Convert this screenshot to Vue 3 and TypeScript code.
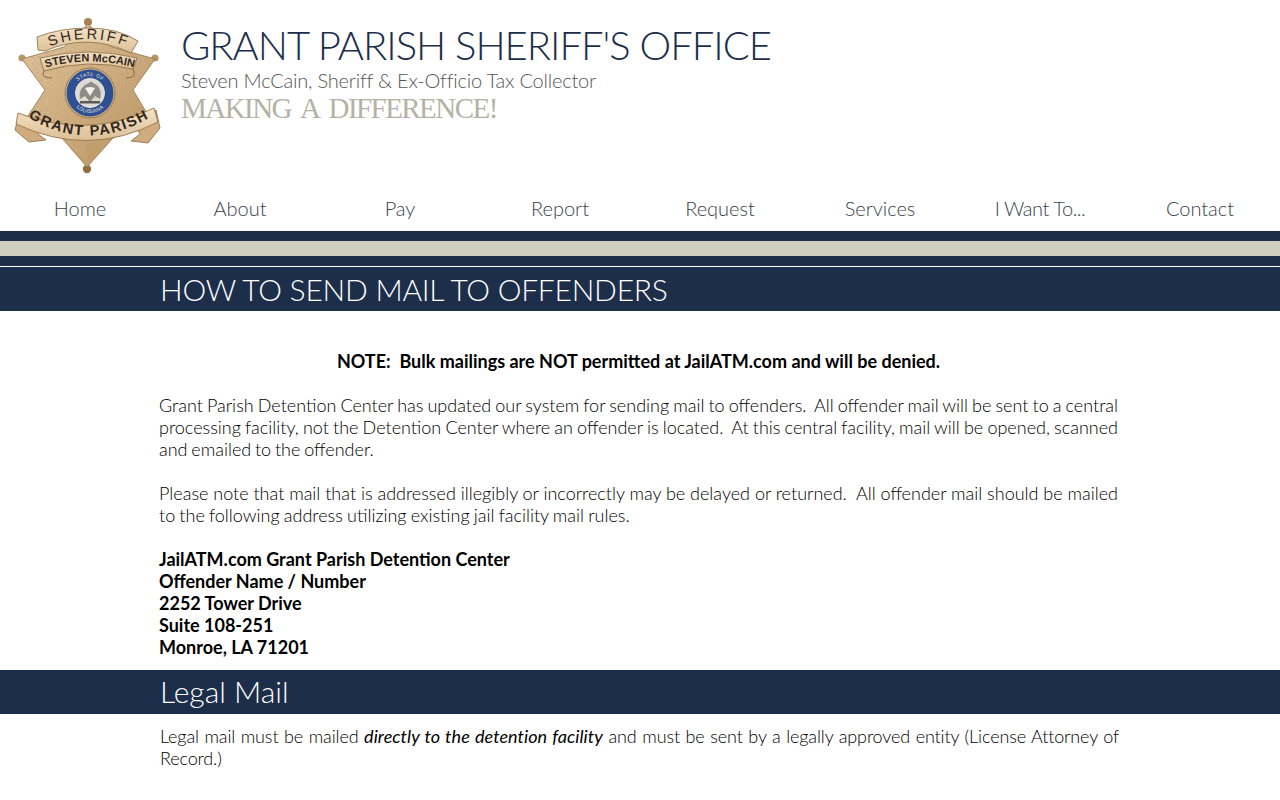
<script setup lang="ts">
const navItems: string[] = ['Home', 'About', 'Pay', 'Report', 'Request', 'Services', 'I Want To...', 'Contact']
</script>

<template>
  <div class="page">
    <header class="header">
      <svg class="badge" viewBox="0 0 180 190" width="180" height="190" aria-label="Sheriff badge">
        <defs>
          <linearGradient id="gold" x1="0" y1="0" x2="1" y2="1">
            <stop offset="0" stop-color="#e6cca6" />
            <stop offset="0.5" stop-color="#d2af83" />
            <stop offset="1" stop-color="#b8925f" />
          </linearGradient>
          <linearGradient id="rib" x1="0" y1="0" x2="0" y2="1">
            <stop offset="0" stop-color="#f3e2c6" />
            <stop offset="1" stop-color="#dcbf96" />
          </linearGradient>
          <filter id="grain" x="0" y="0" width="100%" height="100%">
            <feTurbulence type="fractalNoise" baseFrequency="0.55" numOctaves="2" seed="4" />
            <feColorMatrix values="0 0 0 0 0.45  0 0 0 0 0.32  0 0 0 0 0.15  0 0 0 0.9 -0.25" />
            <feComposite in2="SourceGraphic" operator="in" />
            <feMerge>
              <feMergeNode in="SourceGraphic" />
              <feMergeNode />
            </feMerge>
          </filter>
          <path id="arcTop" d="M47 48 Q88 30 131 48" />
          <path id="arcMid" d="M44 68 Q88 55 136 68" />
          <path id="arcBot" d="M29 118 Q88 153 149 118" />
          <path id="arcState" d="M73 93 A17 17 0 0 1 107 93" />
          <path id="arcLa" d="M70 93 A20 20 0 0 0 110 93" />
        </defs>
        <circle cx="88" cy="22" r="4" fill="#a98450" />
        <circle cx="22" cy="58" r="3.6" fill="#b89564" />
        <circle cx="155" cy="58" r="3.6" fill="#b89564" />
        <circle cx="87" cy="169" r="4.2" fill="#94703f" />
        <path d="M88 24 L112 47 L155 59 L133 90 L152 122 L113 138 L87 167 L62 138 L24 122 L45 90 L22 59 L64 47 Z" fill="url(#gold)" stroke="#8f6d3e" stroke-width="0.8" filter="url(#grain)" />
        <path d="M87 143 L87 165 L103 141 Z" fill="#c09b68" opacity="0.7" />
        <path d="M19 114 L44 122 L38 134 L46 140 L29 142 L15 130 Z" fill="#cfac7d" stroke="#8c6b3d" stroke-width="0.8" />
        <path d="M156 110 L134 122 L140 134 L131 141 L148 143 L160 128 Z" fill="#cfac7d" stroke="#8c6b3d" stroke-width="0.8" />
        <path d="M37 37 Q60 28 88 28 Q118 28 138 41 L131 53 Q110 43 88 42 Q65 42 45 51 L38 50 Z" fill="url(#rib)" stroke="#8c6b3d" stroke-width="0.8" />
        <path d="M40 58 Q88 46 137 58 L133 69 Q88 58 44 71 Z" fill="url(#rib)" stroke="#8c6b3d" stroke-width="0.8" />
        <path d="M44 71 Q40 78 52 78 M133 69 Q138 78 126 78" fill="none" stroke="#8c6b3d" stroke-width="1" />
        <path d="M18 113 Q88 140 154 108 L158 122 Q88 158 16 124 Z" fill="url(#rib)" stroke="#8c6b3d" stroke-width="0.8" />
        <circle cx="90" cy="93" r="25" fill="#c9b089" stroke="#8d6f43" stroke-width="0.8" />
        <circle cx="90" cy="93" r="23.5" fill="#2f4f94" />
        <circle cx="90" cy="93" r="14.5" fill="#dcdad2" stroke="#e9e5d8" stroke-width="1" />
        <path d="M80 99 Q78 87 89 83 Q91 80 93 83 Q103 87 100 99 L95 96 L90 102 L85 96 Z" fill="#8c8b85" />
        <path d="M85 88 Q90 86 95 88 L90 96 Z" fill="#f2f0ea" />
        <rect x="80" y="101" width="20" height="2.5" fill="#5a5a58" />
        <text class="seal-t"><textPath href="#arcState" startOffset="50%" text-anchor="middle">STATE OF</textPath></text>
        <text class="seal-t"><textPath href="#arcLa" startOffset="50%" text-anchor="middle">LOUISIANA</textPath></text>
        <text class="badge-t badge-sheriff"><textPath href="#arcTop" startOffset="50%" text-anchor="middle">SHERIFF</textPath></text>
        <text class="badge-t badge-name"><textPath href="#arcMid" startOffset="50%" text-anchor="middle">STEVEN McCAIN</textPath></text>
        <text class="badge-t badge-parish"><textPath href="#arcBot" startOffset="50%" text-anchor="middle">GRANT PARISH</textPath></text>
      </svg>
      <div class="titles">
        <h1 class="title">GRANT PARISH SHERIFF'S OFFICE</h1>
        <p class="subtitle">Steven McCain, Sheriff &amp; Ex-Officio Tax Collector</p>
        <p class="motto">MAKING A DIFFERENCE!</p>
      </div>
    </header>

    <nav class="nav">
      <a v-for="item in navItems" :key="item" class="nav-item">{{ item }}</a>
    </nav>

    <div class="stripe"></div>

    <h2 class="banner banner-main"><span class="banner-text">HOW TO SEND MAIL TO OFFENDERS</span></h2>

    <main class="content">
      <p class="note">NOTE:&nbsp; Bulk mailings are NOT permitted at JailATM.com and will be denied.</p>
      <p class="para para-first">Grant Parish Detention Center has updated our system for sending mail to offenders.&nbsp; All offender mail will be sent to a central processing facility, not the Detention Center where an offender is located.&nbsp; At this central facility, mail will be opened, scanned and emailed to the offender.</p>
      <p class="para para-second">Please note that mail that is addressed illegibly or incorrectly may be delayed or returned.&nbsp; All offender mail should be mailed to the following address utilizing existing jail facility mail rules.</p>
      <address class="address">
        JailATM.com Grant Parish Detention Center<br />
        Offender Name / Number<br />
        2252 Tower Drive<br />
        Suite 108-251<br />
        Monroe, LA 71201
      </address>
    </main>

    <h2 class="banner banner-sub"><span class="banner-text">Legal Mail</span></h2>

    <section class="legal">
      <p class="legal-text">Legal mail must be mailed <strong class="legal-em"><em>directly to the detention facility</em></strong> and must be sent by a legally approved entity (License Attorney of Record.)</p>
    </section>
  </div>
</template>

<style>
html, body { margin: 0; background: #fff; }
</style>

<style scoped>
.page {
  width: 1280px;
  height: 800px;
  overflow: hidden;
  background: #fff;
  font-family: Lato, "Liberation Sans", sans-serif;
  font-weight: 300;
  color: #111;
}
.header { display: flex; height: 190px; }
.badge { flex: none; }
.badge-t { font-family: "Liberation Sans", sans-serif; fill: #32261a; }
.badge-sheriff { font-size: 14.5px; letter-spacing: 2.6px; font-weight: 400; }
.badge-name { font-size: 11px; font-weight: 700; }
.badge-parish { font-size: 14.5px; letter-spacing: 1.6px; font-weight: 700; }
.seal-t { font-family: "Liberation Sans", sans-serif; font-size: 5px; fill: #e8e6dd; letter-spacing: 0.4px; }
.titles { padding: 23px 0 0 1px; }
.title { margin: 0; font-size: 40px; line-height: 44px; font-weight: 300; letter-spacing: -1.03px; color: #1c2e4a; white-space: nowrap; }
.subtitle { margin: 0; font-size: 20px; line-height: 26px; letter-spacing: -0.2px; color: #555; white-space: nowrap; }
.motto {
  margin: 0;
  font-family: "Liberation Serif", serif;
  font-size: 29px;
  line-height: 31px;
  font-weight: 400;
  letter-spacing: -1.55px;
  word-spacing: 5px;
  color: #b5b2a5;
  white-space: nowrap;
}
.nav { display: grid; grid-template-columns: repeat(8, 160px); height: 41px; }
.nav-item { text-align: center; font-size: 20px; line-height: 36px; color: #39424d; }
.nav-item:nth-child(7) { letter-spacing: -0.45px; }
.stripe {
  height: 15px;
  border-top: 10px solid #1c2e4a;
  border-bottom: 10px solid #1c2e4a;
  background: #cfcfc0;
}
.banner { margin: 0; background: #1c2e4a; color: #fff; font-weight: 300; }
.banner-main { border-top: 1px solid #fff; height: 44px; font-size: 30px; line-height: 44px; letter-spacing: -0.25px; }
.banner-sub { height: 44px; font-size: 30px; line-height: 43px; }
.banner-text { display: block; padding-left: 160px; white-space: nowrap; }
.content { padding: 39px 162px 0 159px; height: 320px; font-size: 18px; line-height: 22px; }
.note { margin: 0 0 22px; text-align: center; font-weight: 700; color: #000; }
.para { margin: 0 0 22px; text-align: justify; color: #000; }
.para-first { word-spacing: -1.1px; }
.para-second { word-spacing: -0.7px; }
.address { font-style: normal; font-weight: 700; color: #000; }
.legal { padding: 11px 161px 0 160px; font-size: 18px; line-height: 22px; color: #000; }
.legal-text { margin: 0; text-align: justify; letter-spacing: -0.13px; }
.legal-em { letter-spacing: 0.06px; }
</style>
